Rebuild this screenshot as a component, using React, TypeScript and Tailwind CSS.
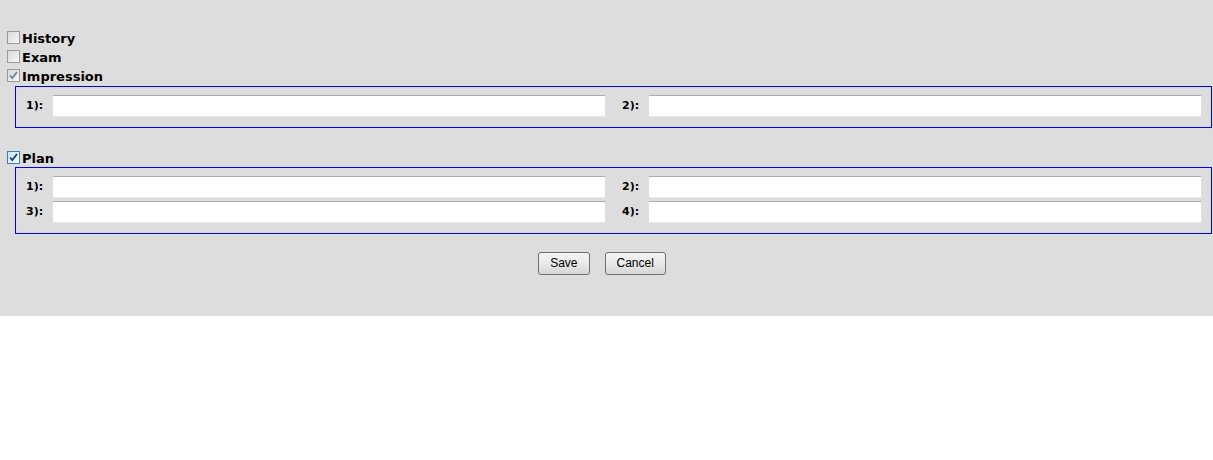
import React from "react";

type CheckState = "off" | "on" | "focus";

function Check({ state }: { state: CheckState }) {
  const boxClass =
    state === "focus"
      ? "border-[#3c7fb1] bg-linear-to-br from-[#cfe6fa] to-[#f2f8fd]"
      : "border-[#9a9a9a] bg-linear-to-br from-[#d9d9d9] to-[#f7f7f7]";
  return (
    <span
      className={`ml-[7px] mr-[2px] flex h-[13px] w-[13px] shrink-0 items-center justify-center border ${boxClass}`}
    >
      {state !== "off" && (
        <svg width="9" height="9" viewBox="0 0 9 9">
          <path
            d="M1 4.5 L3.3 7 L8 1"
            fill="none"
            stroke={state === "focus" ? "#1e3a78" : "#6f80a8"}
            strokeWidth="1.8"
          />
        </svg>
      )}
    </span>
  );
}

function Section({ label, state }: { label: string; state: CheckState }) {
  return (
    <div className="flex h-[19px] items-center">
      <Check state={state} />
      <span className="pt-[1px] text-[13px] leading-[19px] font-bold text-black">{label}</span>
    </div>
  );
}

function Field({ n }: { n: number }) {
  return (
    <div className="flex min-w-0 flex-1 items-center">
      <span className="w-[26px] shrink-0 text-[11px] leading-[22px] font-bold text-black">{n}):</span>
      <input
        type="text"
        className="h-[22px] min-w-0 flex-1 rounded-[2px] border border-t-[#abadb3] border-r-[#dbdfe6] border-b-[#e3e9ef] border-l-[#dbdfe6] bg-white outline-none"
      />
    </div>
  );
}

function FieldBox({ rows }: { rows: number[][] }) {
  return (
    <div className="mr-[1px] ml-[15px] flex flex-col gap-[3px] border border-[#0000ff] pt-[8px] pr-[9px] pb-[10px] pl-[10px]">
      {rows.map((pair, i) => (
        <div key={i} className="flex gap-x-[16px]">
          {pair.map((n) => (
            <Field key={n} n={n} />
          ))}
        </div>
      ))}
    </div>
  );
}

function Btn({ children }: { children: React.ReactNode }) {
  return (
    <button className="h-[23px] rounded-[3px] border border-[#707070] bg-linear-to-b from-[#f4f4f4] via-[#e9e9e9] to-[#d6d6d6] px-[11px] text-[12px] leading-[21px] text-black">
      {children}
    </button>
  );
}

export default function App() {
  return (
    <div className="w-full bg-white" style={{ fontFamily: "'DejaVu Sans', Verdana, sans-serif" }}>
      <div className="bg-[#dddddd] pt-[28px] pb-[41px]">
        <Section label="History" state="off" />
        <Section label="Exam" state="off" />
        <Section label="Impression" state="on" />
        <div className="mt-[1px]">
          <FieldBox rows={[[1, 2]]} />
        </div>

        <div className="mt-[20px]">
          <Section label="Plan" state="focus" />
        </div>
        <FieldBox
          rows={[
            [1, 2],
            [3, 4],
          ]}
        />

        <div
          className="mt-[18px] flex justify-center gap-[15px] pr-[9px]"
          style={{ fontFamily: "'Liberation Sans', Arial, sans-serif" }}
        >
          <Btn>Save</Btn>
          <Btn>Cancel</Btn>
        </div>
      </div>
    </div>
  );
}
